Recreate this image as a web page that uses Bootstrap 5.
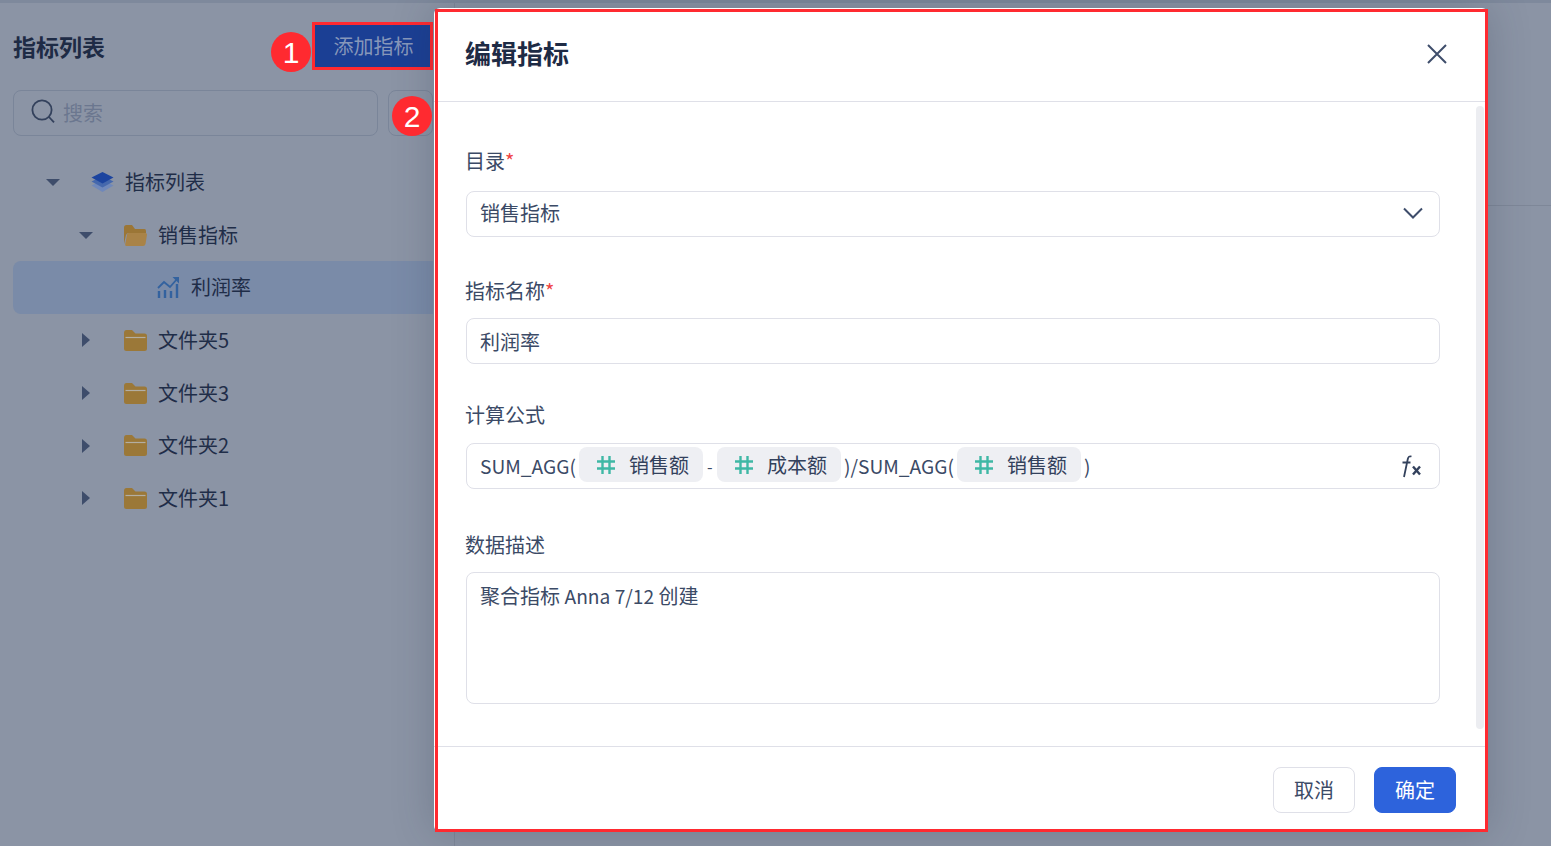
<!DOCTYPE html>
<html lang="zh-CN">
<head>
  <meta charset="UTF-8" />
  <meta name="viewport" content="width=device-width, initial-scale=1.0"/>
  <title>编辑指标</title>
  <link href="https://cdn.jsdelivr.net/npm/bootstrap@5.3.0/dist/css/bootstrap.min.css" rel="stylesheet"/>
  <style>
    html, body { height: 100%; }
    body {
      background: #8b94a5;
      font-family: "Noto Sans CJK SC", sans-serif;
      font-size: 20px;
      color: #33415c;
      overflow: hidden;
      position: relative;
    }
    .top-strip { height: 3px; background: #7e899c; }
    .side-panel { width: 455px; height: 843px; border-right: 1px solid #7f8899; padding: 0 0 0 13px; }
    .side-head { height: 87px; padding-top: 22px; padding-right: 11px; }
    .side-title { font-size: 23px; font-weight: 700; color: #1e2b45; line-height: 30px; margin-top: 6px; }
    .add-btn {
      width: 115px; height: 42px; padding: 0 0 0 2px; border: 0; border-radius: 0;
      background: #1b3f94; color: #8797ba; font-size: 20px; margin-right: 13px;
      outline: 3px solid #ff2a30; outline-offset: 0;
    }
    .search-row { padding-right: 21px; gap: 10px; }
    .search-box, .filter-box { height: 46px; border: 1px solid #7a8599; border-radius: 8px; }
    .search-box { width: 365px; padding-left: 18px; gap: 8px; color: #6b778f; }
    .search-ico { margin-top: -4px; margin-left: -1px; }
    .filter-box { width: 45px; }
    .tree-list { margin-top: 20px; width: 420px; }
    .tree-row { height: 52.7px; color: #1f2d48; }
    .tree-row > span:last-child { margin-top: -1px; }
    .tree-row.on { background: #7a8ba8; border-radius: 8px 0 0 8px; }
    .caret-slot { width: 14px; }
    .caret-down { width: 14px; height: 0; border-left: 7px solid transparent; border-right: 7px solid transparent; border-top: 7px solid #3e4d6b; }
    .caret-right { width: 0; height: 0; border-top: 7px solid transparent; border-bottom: 7px solid transparent; border-left: 8px solid #3e4d6b; margin-left: 3px; }
    .lvl-0 { padding-left: 33px; }
    .lvl-1 { padding-left: 66px; }
    .lvl-2 { padding-left: 144px; }
    .ico-gap { margin-left: 31px; margin-right: 11px; }
    .hline-right { position: absolute; left: 1488px; right: 0; top: 205px; border-top: 1px solid #7e8798; }
    .num-dot {
      position: absolute; width: 40px; height: 40px; border-radius: 50%;
      background: #ff2a30; color: #fff;
      font-family: "Liberation Sans", sans-serif; font-size: 30px;
      z-index: 5;
    }
    .edit-dialog {
      position: absolute; left: 434px; top: 8px; width: 1054px; height: 824px;
      border: 0; border-radius: 6px; background: #fff;
      box-shadow: 0 0 40px rgba(40, 50, 70, .25);
    }
    .red-frame { position: absolute; left: 435px; top: 9px; width: 1053px; height: 823px; border: 3px solid #ff2a30; pointer-events: none; z-index: 4; }
    .dlg-head { height: 94px; padding: 0 40px 2px 31px; border-bottom: 1px solid #dfe0e8; border-radius: 0; }
    .dlg-title { font-size: 26px; font-weight: 700; color: #1e2b45; margin: 0 0 2px; line-height: 1; }
    .dlg-body { height: 644px; padding: 44px 0 0 32px; position: relative; }
    .dlg-foot { height: 86px; padding: 20px 32px 0 0; border-top: 1px solid #dfe0e8; gap: 19px; justify-content: flex-end; align-items: flex-start; }
    .fake-scroll { position: absolute; left: 1042px; top: 4px; width: 8px; height: 623px; background: #ecedf1; border-radius: 4px; }
    .fld-label { display: block; margin: 0 0 0 -1px; line-height: 30px; color: #3b4a66; }
    .req { color: #ef4444; }
    .fld-box {
      width: 974px; height: 46px; padding: 0 13px; border: 1px solid #dfe0e8; border-radius: 8px;
      font-size: 20px; color: #3b4a66; background: #fff;
    }
    .fld-area { height: 132px; padding-top: 8px; line-height: 30px; }
    .gap-a { margin-top: 15px; padding-bottom: 2px; }
    .lab-b { margin-top: 39px; }
    .gap-b { margin-top: 12px; padding-top: 1px; }
    .lab-c { margin-top: 36px; }
    .gap-c { margin-top: 13px; }
    .lab-d { margin-top: 41px; }
    .gap-d { margin-top: 12px; }
    .latin-txt { font-size: 19.2px; }
    .f-tag { height: 35px; width: 124px; margin: 0 3px 3px 3px; padding-left: 18px; gap: 14px; background: #eeeff3; border-radius: 8px; color: #33415c; }
    .f-minus { width: 7px; margin-left: 1px; font-size: 16px; }
    .fx-mark { margin-left: auto; margin-right: 5px; }
    .chev-ico { margin-right: 3px; }
    .btn-cancel, .btn-ok { width: 82px; height: 46px; padding: 0; font-size: 20px; border-radius: 8px; }
    .btn-cancel { background: #fff; border: 1px solid #dfe0e8; color: #3b4a66; }
    .btn-ok { background: #2d63dc; border: 1px solid #2d63dc; color: #fff; }
  </style>
</head>
<body>
  <div class="top-strip"></div>
  <div class="side-panel">
    <div class="side-head d-flex justify-content-between align-items-start">
      <div class="side-title">指标列表</div>
      <button class="add-btn" type="button">添加指标</button>
    </div>
    <div class="search-row d-flex">
      <div class="search-box d-flex align-items-center">
        <svg class="search-ico" width="24" height="25" viewBox="0 0 24 25" fill="none" stroke="#33415c" stroke-width="1.8"><circle cx="11" cy="11" r="9.600"/><path d="M18 18l5 5.400"/></svg>
        <span>搜索</span>
      </div>
      <div class="filter-box"></div>
    </div>
    <div class="tree-list">
      <div class="tree-row lvl-0 d-flex align-items-center">
        <span class="caret-down"></span>
        <span class="ico-gap d-flex">
          <svg width="23" height="20" viewBox="0 0 23 20"><path d="M11.500 8l11 5.500-11 6.500-11-6.500z" fill="#6f88bb"/><path d="M11.500 4l11 5.500-11 6-11-6z" fill="#4568ad"/><path d="M11.500 0l11 5.500-11 6-11-6z" fill="#1c449f"/></svg>
        </span>
        <span>指标列表</span>
      </div>
      <div class="tree-row lvl-1 d-flex align-items-center">
        <span class="caret-down"></span>
        <span class="ico-gap d-flex">
          <svg width="23" height="21" viewBox="0 0 23 21"><path d="M0 2.500Q0 0 2.500 0H8l3 4h9.500Q22 4 22 6v2H5Q2.500 8 2 10L0 19z" fill="#9b7636"/><path d="M3 9.500Q3.300 8 5 8h16.500Q23 8 23 9.500l-1.500 9.500Q21 21 19 21H2.500Q1 21 1.200 19.500z" fill="#a98347"/></svg>
        </span>
        <span>销售指标</span>
      </div>
      <div class="tree-row on lvl-2 d-flex align-items-center">
        <svg class="me-2" width="22" height="21" viewBox="0 0 22 21" fill="none" stroke="#33629f" stroke-width="2.400"><path d="M2 21v-7M8 21v-8M14 21v-7M20 21V7"/><path d="M1 11l6-6 6 5 7-8" stroke-width="1.800"/><path d="M15.500 0H22v6.500z" fill="#33629f" stroke="none"/></svg>
        <span class="ms-1">利润率</span>
      </div>
      <div class="tree-row lvl-1 d-flex align-items-center">
        <span class="caret-slot"><span class="caret-right d-block"></span></span>
        <span class="ico-gap d-flex">
          <svg width="23" height="21" viewBox="0 0 23 21"><path d="M0 3Q0 0 2.500 0H8l3.500 3.500h9Q23 3.500 23 6v12.500Q23 21 20.500 21h-18Q0 21 0 18.500z" fill="#9b7838"/><path d="M1.500 7.500h20" stroke="#b3aea2" stroke-width="1.200"/></svg>
        </span>
        <span>文件夹5</span>
      </div>
      <div class="tree-row lvl-1 d-flex align-items-center">
        <span class="caret-slot"><span class="caret-right d-block"></span></span>
        <span class="ico-gap d-flex">
          <svg width="23" height="21" viewBox="0 0 23 21"><path d="M0 3Q0 0 2.500 0H8l3.500 3.500h9Q23 3.500 23 6v12.500Q23 21 20.500 21h-18Q0 21 0 18.500z" fill="#9b7838"/><path d="M1.500 7.500h20" stroke="#b3aea2" stroke-width="1.200"/></svg>
        </span>
        <span>文件夹3</span>
      </div>
      <div class="tree-row lvl-1 d-flex align-items-center">
        <span class="caret-slot"><span class="caret-right d-block"></span></span>
        <span class="ico-gap d-flex">
          <svg width="23" height="21" viewBox="0 0 23 21"><path d="M0 3Q0 0 2.500 0H8l3.500 3.500h9Q23 3.500 23 6v12.500Q23 21 20.500 21h-18Q0 21 0 18.500z" fill="#9b7838"/><path d="M1.500 7.500h20" stroke="#b3aea2" stroke-width="1.200"/></svg>
        </span>
        <span>文件夹2</span>
      </div>
      <div class="tree-row lvl-1 d-flex align-items-center">
        <span class="caret-slot"><span class="caret-right d-block"></span></span>
        <span class="ico-gap d-flex">
          <svg width="23" height="21" viewBox="0 0 23 21"><path d="M0 3Q0 0 2.500 0H8l3.500 3.500h9Q23 3.500 23 6v12.500Q23 21 20.500 21h-18Q0 21 0 18.500z" fill="#9b7838"/><path d="M1.500 7.500h20" stroke="#b3aea2" stroke-width="1.200"/></svg>
        </span>
        <span>文件夹1</span>
      </div>
    </div>
  </div>

  <div class="hline-right"></div>
  <div class="num-dot d-flex align-items-center justify-content-center" style="left:271px;top:32px">1</div>
  <div class="num-dot d-flex align-items-center justify-content-center" style="left:392px;top:96px">2</div>

  <div class="modal-content edit-dialog">
    <div class="modal-header dlg-head d-flex justify-content-between">
      <h5 class="dlg-title">编辑指标</h5>
      <svg width="22" height="22" viewBox="0 0 22 22" fill="none" stroke="#3e4d6b" stroke-width="2"><path d="M2 2l18 18M20 2L2 20"/></svg>
    </div>
    <div class="modal-body dlg-body">
      <div class="fake-scroll"></div>
      <label class="fld-label">目录<span class="req">*</span></label>
      <div class="form-control fld-box gap-a d-flex align-items-center justify-content-between">
        <span>销售指标</span>
        <svg class="chev-ico" width="20" height="12" viewBox="0 0 20 12" fill="none" stroke="#3e4d6b" stroke-width="2"><path d="M1 1.500l9 9 9-9"/></svg>
      </div>
      <label class="fld-label lab-b">指标名称<span class="req">*</span></label>
      <div class="form-control fld-box gap-b d-flex align-items-center">利润率</div>
      <label class="fld-label lab-c">计算公式</label>
      <div class="form-control fld-box gap-c d-flex align-items-center">
        <span class="latin-txt">SUM_AGG(</span>
        <span class="f-tag d-flex align-items-center">
          <svg width="18" height="18" viewBox="0 0 18 18" fill="none" stroke="#3fb8a5" stroke-width="2.400"><path d="M5.500 0v18M12.500 0v18M0 5.500h18M0 12.500h18"/></svg>
          <span>销售额</span>
        </span>
        <span class="f-minus">-</span>
        <span class="f-tag d-flex align-items-center">
          <svg width="18" height="18" viewBox="0 0 18 18" fill="none" stroke="#3fb8a5" stroke-width="2.400"><path d="M5.500 0v18M12.500 0v18M0 5.500h18M0 12.500h18"/></svg>
          <span>成本额</span>
        </span>
        <span class="latin-txt">)/SUM_AGG(</span>
        <span class="f-tag d-flex align-items-center">
          <svg width="18" height="18" viewBox="0 0 18 18" fill="none" stroke="#3fb8a5" stroke-width="2.400"><path d="M5.500 0v18M12.500 0v18M0 5.500h18M0 12.500h18"/></svg>
          <span>销售额</span>
        </span>
        <span class="latin-txt">)</span>
        <svg class="fx-mark" width="20" height="24" viewBox="0 0 20 24" fill="none" stroke="#33415c"><path d="M10.500 2.500Q7.500 1.500 6.800 5L3 23M1.500 8.500h8" stroke-width="1.800"/><path d="M12 12.500l7 8M19 12.500l-7 8" stroke-width="2.400"/></svg>
      </div>
      <label class="fld-label lab-d">数据描述</label>
      <div class="form-control fld-box fld-area gap-d">聚合指标 <span class="latin-txt">Anna 7/12</span> 创建</div>
    </div>
    <div class="modal-footer dlg-foot">
      <button class="btn btn-cancel m-0" type="button">取消</button>
      <button class="btn btn-ok m-0" type="button">确定</button>
    </div>
  </div>
  <div class="red-frame"></div>
</body>
</html>
